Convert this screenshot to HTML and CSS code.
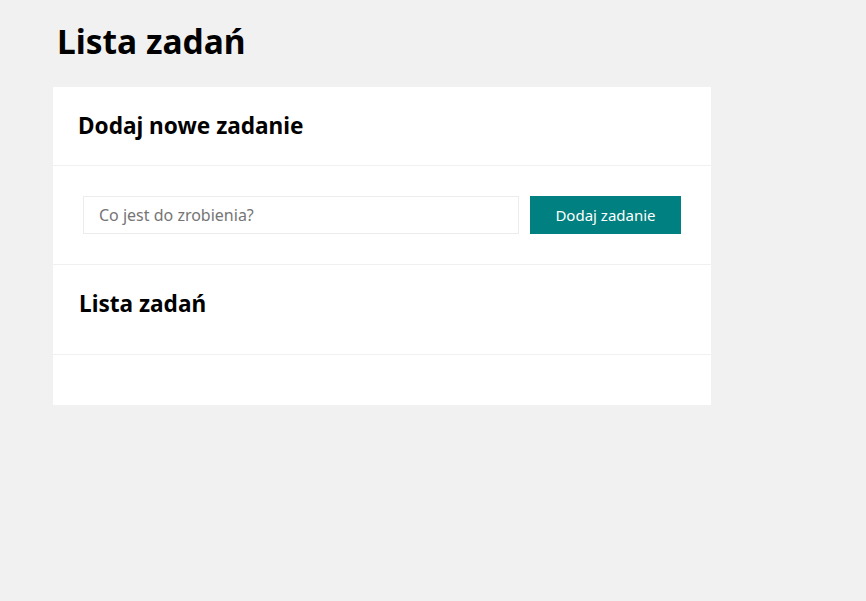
FILE: index.html
```html
<!DOCTYPE html>
<html lang="pl">
<head>
<meta charset="utf-8">
<title>Lista zadań</title>
<link rel="stylesheet" href="styles.css">
</head>
<body>
<div class="page">
  <h1 class="title">Lista zadań</h1>
  <div class="card">
    <div class="section head">
      <h2 class="heading">Dodaj nowe zadanie</h2>
    </div>
    <div class="section form">
      <input class="input" type="text" placeholder="Co jest do zrobienia?">
      <button class="btn" type="button">Dodaj zadanie</button>
    </div>
    <div class="section list-head">
      <h2 class="heading">Lista zadań</h2>
    </div>
    <div class="section list"></div>
  </div>
</div>
</body>
</html>
```
FILE: styles.css
```css
html, body {
  margin: 0;
  padding: 0;
  background: #f1f1f1;
  font-family: "Noto Sans", "Open Sans", sans-serif;
  color: #000;
}
.page {
  padding: 0 0 0 53px;
  width: 658px;
}
.title {
  margin: 0;
  padding: 19px 0 0 4px;
  height: 87px;
  box-sizing: border-box;
  font-size: 33.5px;
  line-height: 44px;
  font-weight: 700;
}
.card {
  background: #fff;
  width: 658px;
}
.section {
  border-bottom: 1px solid #f0f0f0;
  box-sizing: border-box;
}
.section:last-child { border-bottom: none; }
.head {
  height: 79px;
  padding: 0 25px;
  display: flex;
  align-items: center;
}
.heading {
  margin: 0;
  font-size: 22.6px;
  font-weight: 700;
  line-height: 30px;
}
.form {
  height: 99px;
  padding: 30px 30px 0 30px;
  display: flex;
  align-items: flex-start;
  gap: 11px;
}
.input {
  width: 436px;
  height: 38px;
  box-sizing: border-box;
  border: 1px solid #ececec;
  padding: 0 15px;
  font-family: "Noto Sans", "Open Sans", sans-serif;
  font-size: 16px;
  color: #333;
  outline: none;
}
.input::placeholder { color: #757575; }
.btn {
  width: 151px;
  height: 38px;
  border: none;
  background: #008080;
  color: #fff;
  font-family: "Noto Sans", "Open Sans", sans-serif;
  font-size: 15px;
  padding: 0;
  cursor: pointer;
}
.list-head {
  height: 90px;
  padding: 0 26px 12px 26px;
  display: flex;
  align-items: center;
}
.list {
  height: 50px;
}
```
